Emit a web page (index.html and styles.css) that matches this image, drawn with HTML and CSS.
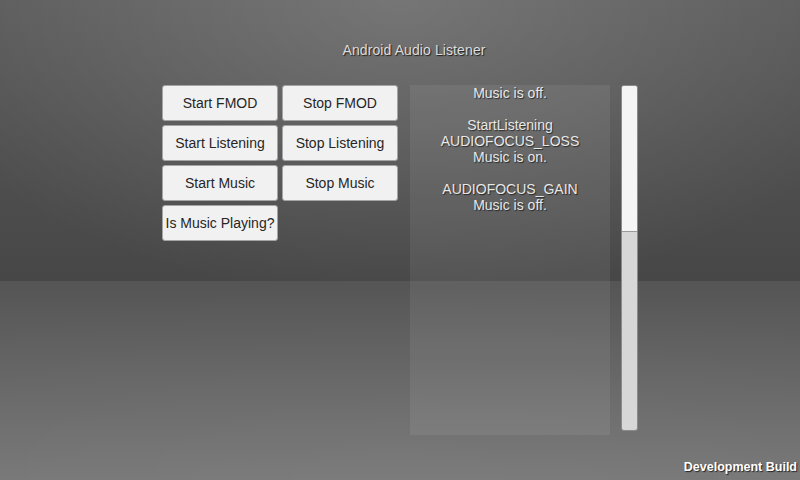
FILE: index.html
```html
<!DOCTYPE html>
<html>
<head>
<meta charset="utf-8">
<link rel="stylesheet" href="styles.css">
</head>
<body>
<div class="screen">
  <div class="column">
    <div class="title">Android Audio Listener</div>
    <div class="content">
      <div class="buttons">
        <button class="btn">Start FMOD</button>
        <button class="btn">Stop FMOD</button>
        <button class="btn">Start Listening</button>
        <button class="btn">Stop Listening</button>
        <button class="btn">Start Music</button>
        <button class="btn">Stop Music</button>
        <button class="btn">Is Music Playing?</button>
      </div>
      <div class="log">
        <div>Music is off.</div>
        <div>&nbsp;</div>
        <div>StartListening</div>
        <div>AUDIOFOCUS_LOSS</div>
        <div>Music is on.</div>
        <div>&nbsp;</div>
        <div>AUDIOFOCUS_GAIN</div>
        <div>Music is off.</div>
      </div>
      <div class="scrollbar"><div class="thumb"></div></div>
    </div>
  </div>
  <div class="devbuild">Development Build</div>
</div>
</body>
</html>
```
FILE: styles.css
```css
html, body {
  margin: 0;
  padding: 0;
}
body {
  width: 800px;
  height: 480px;
  overflow: hidden;
}
.screen {
  position: relative;
  width: 800px;
  height: 480px;
  font-family: "Liberation Sans", Arial, sans-serif;
  background:
    radial-gradient(ellipse 520px 300px at 50% 0, rgba(255,255,255,0.17), rgba(255,255,255,0) 100%) top / 100% 281px no-repeat,
    linear-gradient(#5a5a5a, #474747) top / 100% 281px no-repeat,
    radial-gradient(ellipse 700px 200px at 50% 100%, rgba(255,255,255,0.04), rgba(255,255,255,0) 100%) bottom / 100% 199px no-repeat,
    linear-gradient(#555555, #777777) bottom / 100% 199px no-repeat;
}
.column {
  margin-left: 162px;
  width: 504px;
  display: flex;
  flex-direction: column;
}
.title {
  padding-top: 41px;
  height: 18px;
  line-height: 18px;
  margin-bottom: 26px;
  text-align: center;
  font-size: 14px;
  letter-spacing: 0.1px;
  color: #dcdcdc;
  text-shadow: 1px 1px 1px rgba(0,0,0,0.75);
}
.content {
  display: flex;
  align-items: flex-start;
}
.buttons {
  display: grid;
  grid-template-columns: 116px 116px;
  grid-auto-rows: 36px;
  gap: 4px;
  width: 236px;
}
.btn {
  margin: 0;
  padding: 0;
  box-sizing: border-box;
  border: 1px solid #a4a4a4;
  border-radius: 3px;
  background: #f1f1f1;
  color: #262626;
  font-family: "Liberation Sans", Arial, sans-serif;
  font-size: 14px;
  white-space: nowrap;
  text-align: center;
  line-height: 34px;
}
.log {
  margin-left: 12px;
  width: 200px;
  height: 350px;
  box-sizing: border-box;
  background: rgba(255,255,255,0.07);
  text-align: center;
  font-size: 14px;
  line-height: 16px;
  color: #e8e8e8;
  text-shadow: 1px 1px 1px rgba(0,0,0,0.6);
}
.scrollbar {
  margin-left: 11px;
  width: 17px;
  height: 346px;
  box-sizing: border-box;
  background: #d7d7d7;
  border: 1px solid #8a8a8a;
  border-radius: 3px;
  display: flex;
  flex-direction: column;
}
.thumb {
  height: 145px;
  background: #f5f5f5;
  border-bottom: 1px solid #9a9a9a;
  border-radius: 2px 2px 0 0;
}
.devbuild {
  position: absolute;
  right: 3px;
  bottom: 5px;
  font-size: 12.5px;
  font-weight: bold;
  line-height: 16px;
  color: #ffffff;
  text-shadow: 1px 1px 1px rgba(0,0,0,0.7);
}
```
